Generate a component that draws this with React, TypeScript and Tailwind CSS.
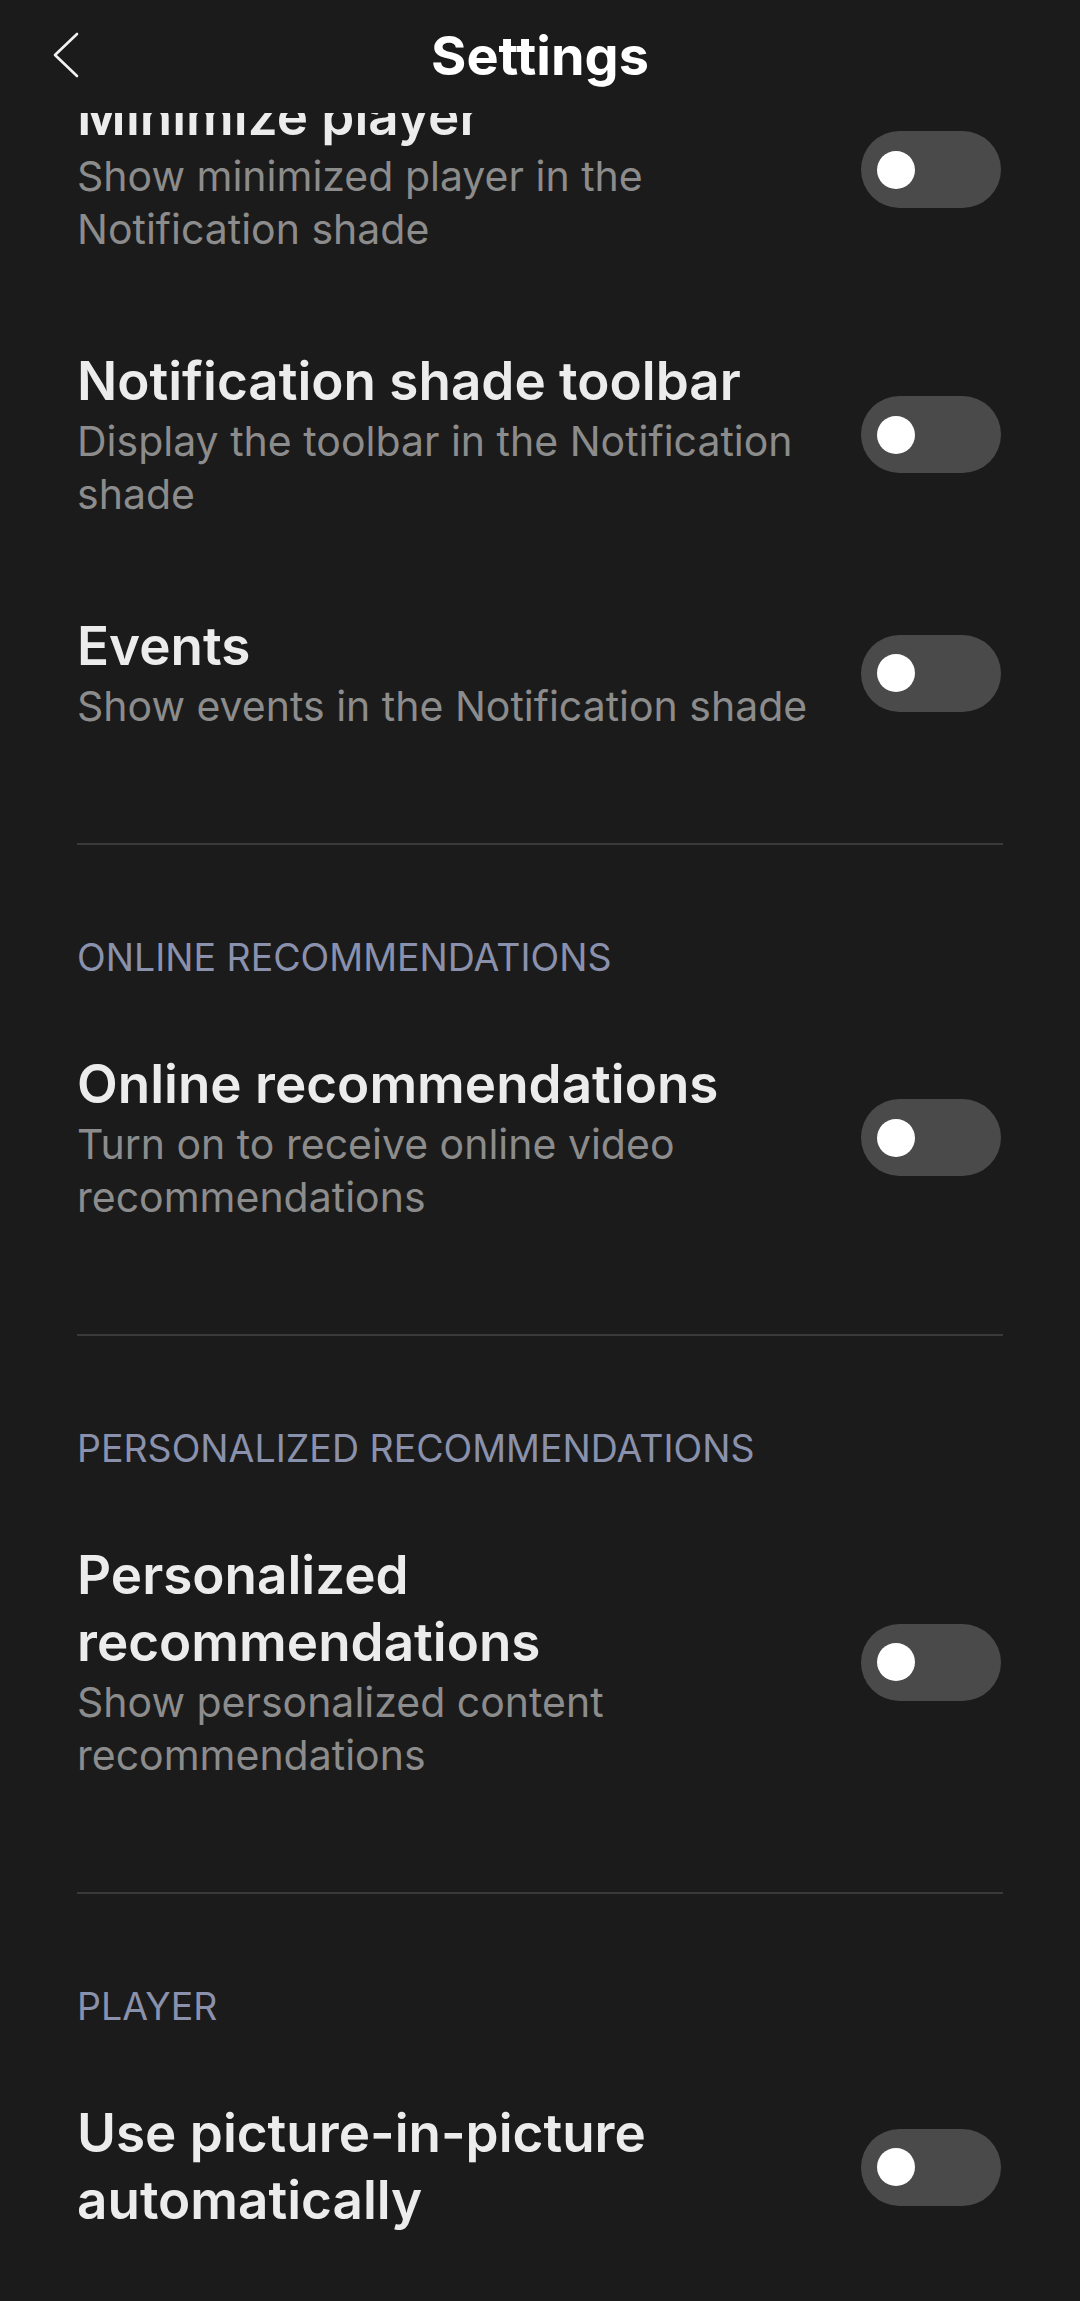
import React from "react";

type SettingRow = {
  title: string;
  desc?: string;
};

type SettingSection = {
  header?: string;
  rows: SettingRow[];
};

const sections: SettingSection[] = [
  {
    rows: [
      {
        title: "Minimize player",
        desc: "Show minimized player in the Notification shade",
      },
      {
        title: "Notification shade toolbar",
        desc: "Display the toolbar in the Notification shade",
      },
      { title: "Events", desc: "Show events in the Notification shade" },
    ],
  },
  {
    header: "Online recommendations",
    rows: [
      {
        title: "Online recommendations",
        desc: "Turn on to receive online video recommendations",
      },
    ],
  },
  {
    header: "Personalized recommendations",
    rows: [
      {
        title: "Personalized recommendations",
        desc: "Show personalized content recommendations",
      },
    ],
  },
  {
    header: "Player",
    rows: [{ title: "Use picture-in-picture automatically" }],
  },
];

const Toggle = () => (
  <div className="mr-[2px] flex h-[77px] w-[140px] shrink-0 items-center rounded-full bg-[#4a4a4a] pl-[16px]">
    <div className="h-[38px] w-[38px] rounded-full bg-white" />
  </div>
);

const Row = ({ title, desc }: SettingRow) => (
  <div className="flex items-center gap-[28px] py-[46px]">
    <div className="min-w-0 flex-1">
      <div className="text-[53px] font-semibold leading-[67px] text-[#ececec]">
        {title}
      </div>
      {desc && (
        <div className="text-[41px] leading-[53px] text-[#8c8c8c]">{desc}</div>
      )}
    </div>
    <Toggle />
  </div>
);

const Header = () => (
  <div className="grid h-[113px] grid-cols-[1fr_auto_1fr] bg-[#1b1b1b]">
    <div className="pl-[52px] pt-[31px]">
      <svg width="30" height="48" viewBox="0 0 30 48" fill="none">
        <polyline
          points="25,3 3,24 25,45"
          stroke="#f2f2f2"
          strokeWidth="2.6"
          strokeLinecap="round"
          strokeLinejoin="round"
        />
      </svg>
    </div>
    <div className="pt-[23px] text-[54px] font-bold leading-[66px] text-white">
      Settings
    </div>
    <div />
  </div>
);

export default function App() {
  return (
    <div
      className="flex h-[2301px] w-[1080px] flex-col overflow-hidden bg-[#1b1b1b]"
      style={{ fontFamily: "Inter, 'Noto Sans', sans-serif" }}
    >
      <Header />
      <div className="flex-1 overflow-hidden">
        <div className="-mt-[76px] px-[77px]">
          {sections.map((section, i) => (
            <div key={i}>
              {i > 0 && (
                <>
                  <div className="mt-[64px] h-[2px] bg-[#3a3a3a]" />
                  <div className="mb-[23px] mt-[89px] text-[37.5px] uppercase leading-[48px] text-[#8a91ad]">
                    {section.header}
                  </div>
                </>
              )}
              {section.rows.map((r) => (
                <Row key={r.title} {...r} />
              ))}
            </div>
          ))}
        </div>
      </div>
    </div>
  );
}
